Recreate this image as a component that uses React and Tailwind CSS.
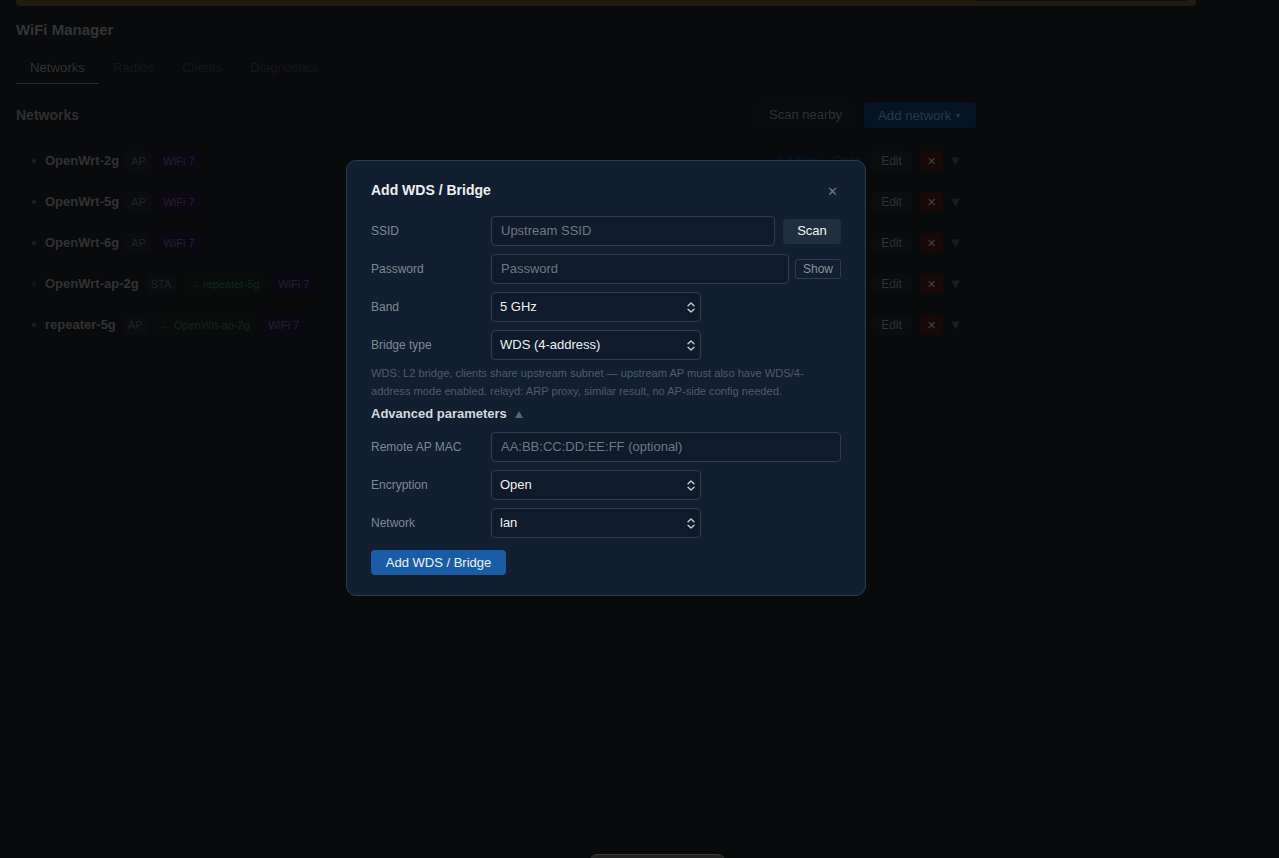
import React from "react";

const rows = [
  { name: "OpenWrt-2g", mode: "AP", on: true },
  { name: "OpenWrt-5g", mode: "AP", on: true },
  { name: "OpenWrt-6g", mode: "AP", on: true },
  { name: "OpenWrt-ap-2g", mode: "STA", on: false, link: "→ repeater-5g" },
  { name: "repeater-5g", mode: "AP", on: true, link: "← OpenWrt-ap-2g" },
];

function Badge({ className, children }) {
  return <span className={`flex h-5 items-center rounded-[3px] text-[11px] leading-none ${className}`}>{children}</span>;
}

function Row({ r }) {
  return (
    <div className="flex h-[41px] items-center border-b border-[#0a0b0d] pr-4 pl-4">
      <span className={`mr-[9px] h-1 w-1 rounded-full ${r.on ? "bg-[#0a2a1c]" : "bg-[#131517]"}`} />
      <span className="mr-[7px] text-[13px] font-bold text-[#313233]">{r.name}</span>
      <div className="flex items-center gap-[6.5px]">
        <Badge className="bg-[#0a0c0f] px-[5px] text-[#202326]">{r.mode}</Badge>
        {r.link && <Badge className="bg-[#080c0b] px-[6px] text-[#13261a]">{r.link}</Badge>}
        <Badge className="bg-[#0b0813] px-[6px] text-[#25212d]">WiFi 7</Badge>
      </div>
      <div className="ml-auto flex items-center">
        <Badge className="mr-[9px] bg-[#060b12] px-[6px] text-[#0e1a28]">2.4 GHz</Badge>
        <span className="mr-[9px] text-[12px] text-[#161719]">Open</span>
        <span className="flex h-5 w-[41px] items-center justify-center rounded-[3px] bg-[#0a0c0e] text-[12px] text-[#303234]">Edit</span>
        <span className="ml-2 flex h-5 w-[23px] items-center justify-center rounded-[3px] bg-[#180909] text-[11px] text-[#4a3e3e]">✕</span>
        <svg className="ml-2" width="9" height="9" viewBox="0 0 9 9" fill="#1a1b1d">
          <path d="M0 0.5h9L4.5 8.5z" />
        </svg>
      </div>
    </div>
  );
}

function Label({ children }) {
  return <label className="w-[120px] shrink-0 text-[12px] text-[#7f8790]">{children}</label>;
}

function Field({ label, placeholder, children }) {
  return (
    <div className="flex h-[30px] items-center">
      <Label>{label}</Label>
      <input
        placeholder={placeholder}
        className="h-[30px] min-w-0 flex-1 rounded-[4px] border border-[#333b49] bg-[#0f1b2a] px-[9px] pb-[1px] text-[13px] text-white outline-none placeholder:text-[#6f7680]"
      />
      {children}
    </div>
  );
}

function Chevrons() {
  return (
    <svg className="pointer-events-none absolute top-[10px] right-[6px]" width="8" height="11" viewBox="0 0 8 11" fill="none" stroke="#c9ced4" strokeWidth="1.3" strokeLinecap="round" strokeLinejoin="round">
      <path d="M1 3.8 4 1l3 2.8" />
      <path d="M1 7.2 4 10l3-2.8" />
    </svg>
  );
}

function SelectField({ label, value }) {
  return (
    <div className="flex h-[30px] items-center">
      <Label>{label}</Label>
      <div className="relative w-[210px]">
        <select
          defaultValue={value}
          className="h-[30px] w-full appearance-none rounded-[4px] border border-[#333b49] bg-[#0f1b2a] pl-2 text-[13px] text-[#eef0f2] outline-none"
        >
          <option>{value}</option>
        </select>
        <Chevrons />
      </div>
    </div>
  );
}

export default function App() {
  return (
    <div className="relative h-[858px] w-full overflow-hidden bg-[#090a0b] font-['Liberation_Sans',Arial,sans-serif]">
      <div className="w-[1212px] pl-4 pr-4">
        <div className="relative h-[6px] w-full rounded-b-[4px] bg-[#211a0f]">
          <div className="absolute top-0 right-2 h-[1px] w-[212px] bg-[#101012]" />
        </div>
        <h1 className="mt-4 text-[15px] leading-4 font-bold text-[#333435]">WiFi Manager</h1>
        <div className="mt-[15px] flex h-[31px] text-[13.2px] leading-[30px]">
          <span className="border-b border-[#1a2c40] px-[14px] text-[#2f3133]">Networks</span>
          <span className="px-[14px] text-[#15171a]">Radios</span>
          <span className="px-[14px] text-[#15171a]">Clients</span>
          <span className="px-[14px] text-[#15171a]">Diagnostics</span>
        </div>
        <div className="w-[960px]">
          <div className="mt-[18px] flex h-[26px] items-center">
            <h2 className="pt-[1px] text-[14px] font-bold text-[#2e2f30]">Networks</h2>
            <div className="ml-auto flex items-center gap-2">
              <span className="flex h-[26px] items-center rounded-[4px] bg-[#0a0b0d] px-[14px] text-[13px] text-[#2f3133]">Scan nearby</span>
              <span className="flex h-[26px] w-[112px] items-center rounded-[4px] bg-[#051423] px-[14px] pt-[1px] text-[13.2px] text-[#283848]">
                Add network<span className="ml-[5px] text-[8px]">▾</span>
              </span>
            </div>
          </div>
          <div className="mt-[13px]">
            {rows.map((r) => (
              <Row key={r.name} r={r} />
            ))}
          </div>
        </div>
      </div>

      <div className="absolute top-[854px] left-[588px] h-[20px] w-[139px] rounded-t-[10px] border border-[#3a3a3a] bg-[#232323]" />

      <div className="absolute top-[160px] left-[346px] w-[520px] rounded-[10px] border border-[#273b53] bg-[#111f30] px-6 pt-[21px] pb-5">
        <div className="flex h-[17px] items-center justify-between">
          <h3 className="text-[14px] font-bold text-[#eef0f2]">Add WDS / Bridge</h3>
          <span className="mt-[2px] mr-[3px] text-[13px] leading-none text-[#6f7780]">✕</span>
        </div>
        <div className="mt-[17px] flex flex-col gap-2">
          <Field label="SSID" placeholder="Upstream SSID">
            <button className="ml-2 h-[25px] w-[58px] rounded-[4px] bg-[#212e3f] text-[13px] font-medium text-[#f2f4f6]">Scan</button>
          </Field>
          <Field label="Password" placeholder="Password">
            <button className="ml-[6px] h-5 w-[46px] rounded-[3px] border border-[#303c4e] text-[12px] text-[#8b929a]">Show</button>
          </Field>
          <SelectField label="Band" value="5 GHz" />
          <SelectField label="Bridge type" value="WDS (4-address)" />
        </div>
        <p className="mt-1 text-[11.1px] leading-[18px] text-[#525a64]">
          WDS: L2 bridge, clients share upstream subnet — upstream AP must also have WDS/4-address mode enabled. relayd: ARP proxy, similar result, no AP-side config needed.
        </p>
        <div className="mt-[7px] flex h-[14px] items-center text-[13px] font-bold text-[#d5d8dc]">
          Advanced parameters
          <svg className="ml-2" width="8" height="7" viewBox="0 0 8 7" fill="#5a6470">
            <path d="M4 0l4 7H0z" />
          </svg>
        </div>
        <div className="mt-[11px] flex flex-col gap-2">
          <Field label="Remote AP MAC" placeholder="AA:BB:CC:DD:EE:FF (optional)" />
          <SelectField label="Encryption" value="Open" />
          <SelectField label="Network" value="lan" />
        </div>
        <button className="mt-3 h-[25px] w-[135px] rounded-[4px] bg-[#1a5da6] text-[13px] font-medium text-[#eef3f8]">Add WDS / Bridge</button>
      </div>
    </div>
  );
}
